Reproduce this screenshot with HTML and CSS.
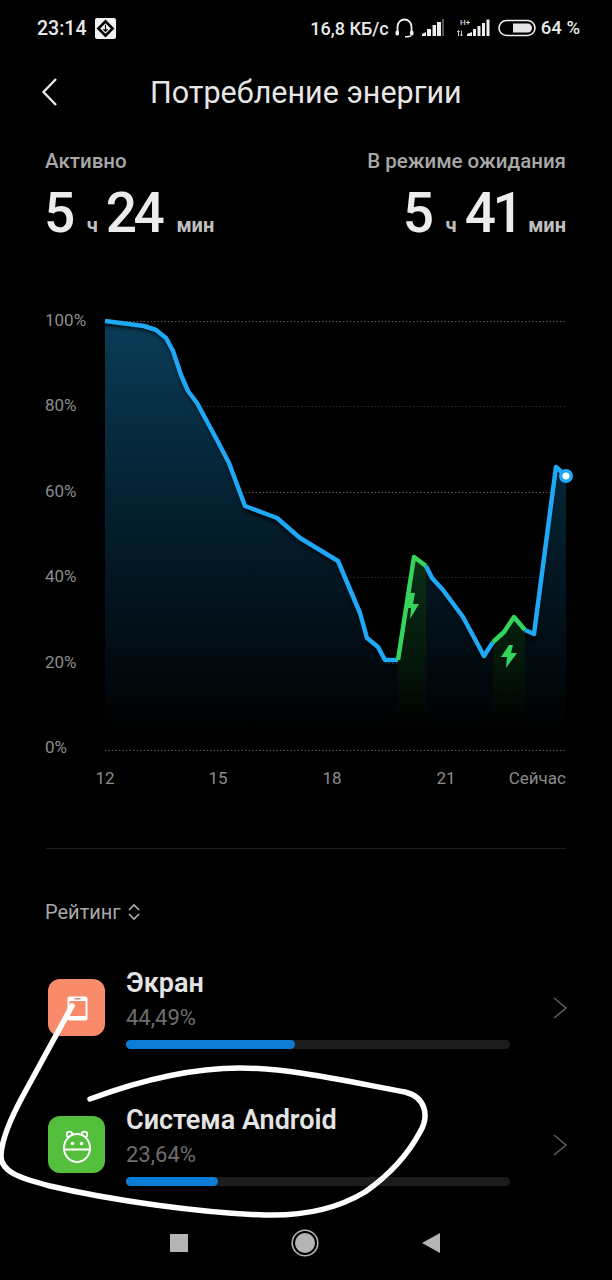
FILE: index.html
```html
<!DOCTYPE html>
<html lang="ru">
<head>
  <meta charset="utf-8">
  <title>Потребление энергии</title>
  <link rel="stylesheet" href="styles.css">
</head>
<body>
  <div class="phone">
    <div class="status-bar">
      <div class="status-left">
        <span class="clock">23:14</span>
        <svg class="notif" width="21" height="21" viewBox="0 0 20 20">
          <rect width="20" height="20" rx="2" fill="#f2f2f2"/>
          <path d="M10 1.500L18.500 10L10 18.500L1.500 10Z" fill="#000"/>
          <path d="M10 5L15 10L10 15L5 10Z" fill="#f2f2f2"/>
          <path d="M10 6.500V12.500M8 10.500L10 12.800L12 10.500" stroke="#000" stroke-width="1.100" fill="none"/>
        </svg>
      </div>
      <div class="status-right">
        <span class="speed">16,8 КБ/с</span>
        <svg class="headset" width="19" height="20" viewBox="0 0 19 20">
          <path d="M2.500 14V9C2.500 4.500 5.500 1.500 9.500 1.500S16.500 4.500 16.500 9V14" stroke="#eee" stroke-width="1.800" fill="none"/>
          <rect x="0.500" y="12.500" width="3.500" height="5" rx="1.500" fill="#eee"/>
          <rect x="15" y="12.500" width="3.500" height="5" rx="1.500" fill="#eee"/>
          <path d="M16 17.500C15 18.800 13 18.800 10 18.800" stroke="#eee" stroke-width="1.500" fill="none"/>
        </svg>
        <svg class="signal" width="22" height="18" viewBox="0 0 22 18">
          <path d="M0 17V15L4 13V17Z" fill="#eee"/>
          <rect x="5" y="10" width="4" height="7" fill="#eee"/>
          <rect x="10.500" y="6" width="3.500" height="11" fill="#eee"/>
          <rect x="15" y="3" width="4" height="14" fill="#eee"/>
          <rect x="20" y="0" width="2" height="17" fill="#555"/>
        </svg>
        <svg class="signal-two" width="33" height="20" viewBox="0 0 33 20">
          <text class="net-type" x="3" y="6.500">H+</text>
          <path d="M1.500 18V12.500M0.200 14L1.500 12.500L2.800 14M4.500 12.500V18M3.200 16.500L4.500 18L5.800 16.500" stroke="#ddd" stroke-width="0.900" fill="none"/>
          <path d="M10 18V16L15 14V18Z" fill="#eee"/>
          <rect x="16" y="11" width="3" height="7" fill="#eee"/>
          <rect x="20.500" y="8" width="3" height="10" fill="#eee"/>
          <rect x="25" y="5" width="3" height="13" fill="#eee"/>
          <rect x="29.500" y="1.500" width="3" height="16.500" fill="#eee"/>
        </svg>
        <svg class="battery" width="38" height="18" viewBox="0 0 38 18">
          <rect x="1" y="1.500" width="36" height="15" rx="7.500" stroke="#eee" stroke-width="1.600" fill="none"/>
          <path d="M15 4.500H29.500A4.500 4.500 0 0 1 29.500 13.500H15Z" fill="#e6e6e6"/>
        </svg>
        <span>64 %</span>
      </div>
    </div>

    <header class="title-bar">
      <svg class="back" width="18" height="30" viewBox="0 0 18 30">
        <path d="M15 2L2.500 15L15 28" stroke="#e8e8e8" stroke-width="2.400" fill="none"/>
      </svg>
      <h1>Потребление энергии</h1>
    </header>

    <section class="stats">
      <div class="stat">
        <div class="stat-label">Активно</div>
        <div class="stat-value"><b>5</b><i>ч</i><b>24</b><i>мин</i></div>
      </div>
      <div class="stat stat-right">
        <div class="stat-label">В режиме ожидания</div>
        <div class="stat-value"><b>5</b><i>ч</i><b>41</b><i>мин</i></div>
      </div>
    </section>

    <svg class="chart" width="612" height="500" viewBox="0 300 612 500">
      <defs>
        <linearGradient id="areaFill" gradientUnits="userSpaceOnUse" x1="0" y1="321" x2="0" y2="735">
          <stop offset="0" stop-color="#0a3c57"/>
          <stop offset="0.4" stop-color="#052334"/>
          <stop offset="0.75" stop-color="#020f17"/>
          <stop offset="1" stop-color="#000"/>
        </linearGradient>
        <linearGradient id="greenFill" gradientUnits="userSpaceOnUse" x1="0" y1="560" x2="0" y2="730">
          <stop offset="0" stop-color="#0a2e14"/>
          <stop offset="0.6" stop-color="#04170a"/>
          <stop offset="1" stop-color="#000"/>
        </linearGradient>
        <clipPath id="plotClip">
          <rect x="105" y="321" width="461" height="430"/>
        </clipPath>
        <filter id="soften" x="-5%" y="-5%" width="110%" height="110%" color-interpolation-filters="sRGB">
          <feGaussianBlur stdDeviation="2.500"/>
        </filter>
      </defs>

      <g class="grid">
        <line x1="105" y1="321.500" x2="566" y2="321.500"/>
        <line class="dim" x1="105" y1="406.500" x2="566" y2="406.500"/>
        <line x1="105" y1="492.500" x2="566" y2="492.500"/>
        <line class="dim" x1="105" y1="577.500" x2="566" y2="577.500"/>
        <line x1="105" y1="663.500" x2="566" y2="663.500"/>
        <line x1="105" y1="750.500" x2="566" y2="750.500"/>
      </g>

      <g clip-path="url(#plotClip)">
        <path class="area" fill="url(#areaFill)" filter="url(#soften)" d="M95 324L144 329L156 333L166 341L173 354L181 378L188 394L197 406L217 443L229 466L245 511L277 523L300 542L338 565L360 617L367 642L378 651L385 665L398 665L414 562L426 571L432 582L443 594L463 621L484 661L493 647L504 637L514 622L525 637L534 641L556 470L576 476V745H95Z"/>
        <path fill="url(#greenFill)" d="M398 660L414 557L426 566V730H398Z"/>
        <path fill="url(#greenFill)" d="M493 642L504 632L514 617L525 630V730H493Z"/>
      </g>

      <path class="line-blue" d="M105 321L144 326L156 330L166 338L173 351L181 375L188 391L197 403L217 440L229 463L245 506L277 518L300 538L338 561L360 613L367 638L378 647L385 660L398 660"/>
      <path class="line-green" d="M398 660L414 557L426 566"/>
      <path class="line-blue" d="M426 566L432 578L443 590L463 617L484 656L493 642"/>
      <path class="line-green" d="M493 642L504 632L514 617L525 630"/>
      <path class="line-blue" d="M525 630L534 634L556 467L566 476"/>

      <path class="bolt" d="M410 593L406 608L411 608L410 619L419 604L413 604L415 593Z"/>
      <path class="bolt" d="M509 645L501 657L507 657L506 668L517 653L511 653L513 645Z"/>

      <circle cx="566" cy="476" r="7" fill="#1ea8f5"/>
      <circle cx="566" cy="476" r="3.500" fill="#fff"/>

      <g class="axis-y">
        <text x="45" y="326">100%</text>
        <text x="45" y="411">80%</text>
        <text x="45" y="497">60%</text>
        <text x="45" y="582">40%</text>
        <text x="45" y="668">20%</text>
        <text x="45" y="753">0%</text>
      </g>
      <g class="axis-x">
        <text x="105" y="784">12</text>
        <text x="218" y="784">15</text>
        <text x="332" y="784">18</text>
        <text x="446" y="784">21</text>
        <text class="now" x="566" y="784">Сейчас</text>
      </g>
    </svg>

    <hr class="divider">

    <div class="rank-head">
      <span>Рейтинг</span>
      <svg width="14" height="18" viewBox="0 0 14 18">
        <path d="M2 7L7 2L12 7M2 11L7 16L12 11" stroke="#b0b0b0" stroke-width="1.600" fill="none"/>
      </svg>
    </div>

    <div class="app-list">
      <div class="app-row">
        <div class="app-icon screen">
          <svg width="24" height="28" viewBox="0 0 24 28">
            <rect x="2.500" y="2.500" width="20" height="24" rx="2" fill="#fff"/>
            <rect x="4.500" y="7" width="16" height="15" fill="#f98a6a"/>
            <rect x="9.500" y="4" width="6" height="1.600" fill="#c9908a"/>
          </svg>
        </div>
        <div class="app-info">
          <div class="app-name">Экран</div>
          <div class="app-pct">44,49%</div>
          <div class="bar"><div class="bar-fill" style="width: 44%"></div></div>
        </div>
        <svg class="chev" width="16" height="24" viewBox="0 0 16 24">
          <path d="M2 2L14 12L2 22" stroke="#5c5c5c" stroke-width="1.600" fill="none"/>
        </svg>
      </div>
      <div class="app-row">
        <div class="app-icon android">
          <svg width="32" height="36" viewBox="0 0 32 36">
            <circle cx="8.500" cy="7.500" r="2.800" fill="none" stroke="#fff" stroke-width="1.800"/>
            <circle cx="23.500" cy="7.500" r="2.800" fill="none" stroke="#fff" stroke-width="1.800"/>
            <ellipse cx="16" cy="21" rx="13" ry="14" fill="#53bf3d" stroke="#fff" stroke-width="2"/>
            <path d="M3 22.500H29" stroke="#fff" stroke-width="2"/>
            <circle cx="11.500" cy="16.500" r="1.800" fill="#fff"/>
            <circle cx="20.500" cy="16.500" r="1.800" fill="#fff"/>
          </svg>
        </div>
        <div class="app-info">
          <div class="app-name">Система Android</div>
          <div class="app-pct">23,64%</div>
          <div class="bar"><div class="bar-fill" style="width: 24%"></div></div>
        </div>
        <svg class="chev" width="16" height="24" viewBox="0 0 16 24">
          <path d="M2 2L14 12L2 22" stroke="#5c5c5c" stroke-width="1.600" fill="none"/>
        </svg>
      </div>
    </div>

    <nav class="nav-bar">
      <svg width="18" height="18" viewBox="0 0 18 18"><rect width="18" height="18" fill="#b4b4b4"/></svg>
      <svg width="28" height="28" viewBox="0 0 28 28">
        <circle cx="14" cy="14" r="12.800" fill="none" stroke="#b4b4b4" stroke-width="1.600"/>
        <circle cx="14" cy="14" r="10" fill="#b4b4b4"/>
      </svg>
      <svg width="18" height="20" viewBox="0 0 18 20"><path d="M18 0V20L0 10Z" fill="#b4b4b4"/></svg>
    </nav>

    <!-- hand-drawn marker over the screenshot -->
    <svg class="scribble" width="612" height="1280" viewBox="0 0 612 1280">
      <path d="M90 1099C125 1086 180 1068 240 1068C290 1068 350 1082 405 1092C425 1097 430 1115 420 1132C405 1160 385 1178 365 1192C335 1210 300 1216 265 1215C200 1213 110 1200 50 1186C20 1178 0 1172 1 1155C2 1135 15 1110 25 1092L72 1006"/>
    </svg>
  </div>
</body>
</html>
```

FILE: styles.css
```css
* {
  box-sizing: border-box;
}

body {
  margin: 0;
  background: #000;
  font-family: Roboto, "Liberation Sans", sans-serif;
}

.phone {
  position: relative;
  width: 612px;
  height: 1280px;
  overflow: hidden;
  background: #000;
  color: #e6e6e6;
}

.status-bar {
  display: flex;
  justify-content: space-between;
  align-items: center;
  height: 36px;
  margin-top: 10px;
  padding: 0 32px 0 37px;
  font-size: 18.500px;
  font-weight: 500;
  color: #e8e8e8;
}

.status-left,
.status-right {
  display: flex;
  align-items: center;
}

.clock {
  font-size: 19.500px;
}

.notif {
  margin-left: 9px;
}

.speed {
  font-size: 18px;
}

.headset {
  margin-left: 6px;
}

.signal {
  margin-left: 8px;
}

.signal-two {
  margin-left: 13px;
}

.net-type {
  font-size: 8px;
  fill: #ddd;
}

.battery {
  margin: 0 5px 0 8px;
}

.title-bar {
  display: flex;
  align-items: center;
  height: 60px;
  margin-top: 16px;
  padding-left: 41px;
}

.title-bar h1 {
  margin: 0 0 0 91px;
  font-size: 30.500px;
  font-weight: 400;
  color: #e6e6e6;
}

.stats {
  display: flex;
  justify-content: space-between;
  margin-top: 27px;
  padding: 0 46px 0 45px;
}

.stat-right .stat-label {
  text-align: right;
}

.stat-right .stat-value {
  justify-content: flex-end;
}

.stat-label {
  font-size: 20.500px;
  font-weight: 500;
  line-height: 24px;
  color: #a8a8a8;
}

.stat-value {
  display: flex;
  align-items: baseline;
  height: 64px;
  margin-top: 8px;
  margin-left: -1px;
  line-height: 64px;
}

.stat-value b {
  font-size: 55px;
  font-weight: 500;
  letter-spacing: -3.500px;
  color: #ececec;
}

.stat-value i {
  margin: 0 8px 0 15px;
  font-size: 20px;
  font-style: normal;
  font-weight: 700;
  color: #c0c0c0;
}

.stat-value i:last-child {
  margin-right: 0;
}

.stat-right .stat-value i:last-child {
  margin-left: 8px;
}

.chart {
  display: block;
  margin-top: 55px;
}

.grid line {
  stroke: #5a5a5a;
  stroke-width: 1;
  stroke-dasharray: 1.500 2;
}

.grid line.dim {
  stroke: #2a2a2a;
}

.line-blue,
.line-green {
  fill: none;
  stroke-width: 4.500;
  stroke-linejoin: round;
}

.line-blue {
  stroke: #1ea8f5;
}

.line-green {
  stroke: #35d45c;
}

.bolt {
  fill: #35d45c;
}

.axis-y text,
.axis-x text {
  font-size: 17px;
  fill: #8c8c8c;
}

.axis-x text {
  text-anchor: middle;
}

.axis-x text.now {
  text-anchor: end;
}

.divider {
  height: 1px;
  margin: 48px 46px 0;
  border: 0;
  background: #1e1e1e;
}

.rank-head {
  display: flex;
  align-items: center;
  gap: 6px;
  height: 24px;
  margin-top: 51px;
  padding-left: 45px;
  font-size: 20px;
  color: #a8a8a8;
}

.app-list {
  display: flex;
  flex-direction: column;
  gap: 32px;
  margin-top: 31px;
}

.app-row {
  display: flex;
  align-items: center;
  height: 105px;
  padding-left: 48px;
}

.app-icon {
  display: flex;
  align-items: center;
  justify-content: center;
  flex: none;
  width: 57px;
  height: 57px;
  border-radius: 12px;
}

.app-icon.screen {
  background: #f98a6a;
}

.app-icon.android {
  background: #53bf3d;
}

.app-info {
  width: 384px;
  margin-left: 21px;
}

.app-name {
  font-size: 27px;
  font-weight: 600;
  line-height: 32px;
  color: #e4e4e4;
}

.app-pct {
  margin-top: 6px;
  font-size: 22px;
  line-height: 26px;
  color: #6e6e6e;
}

.bar {
  height: 9px;
  margin-top: 9px;
  border-radius: 5px;
  background: #1c1c1c;
}

.bar-fill {
  height: 100%;
  border-radius: 5px;
  background: #0b7dd6;
}

.chev {
  margin-left: 42px;
}

.nav-bar {
  position: absolute;
  left: 170px;
  top: 1229px;
  display: flex;
  align-items: center;
  justify-content: space-between;
  width: 270px;
}

.scribble {
  position: absolute;
  left: 0;
  top: 0;
  pointer-events: none;
}

.scribble path {
  fill: none;
  stroke: #fff;
  stroke-width: 5.500;
  stroke-linecap: round;
  stroke-linejoin: round;
}
```
